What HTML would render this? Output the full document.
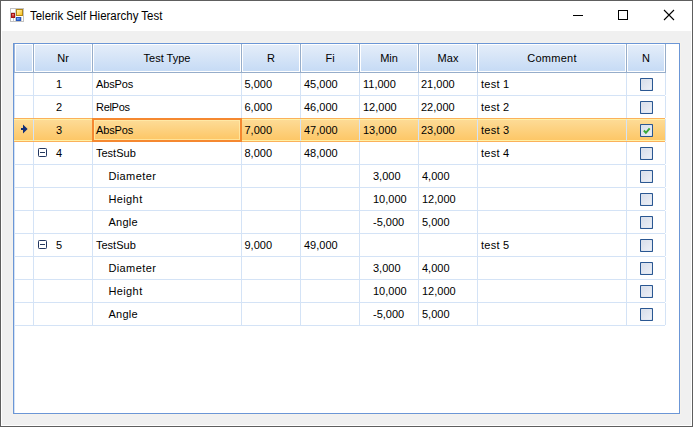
<!DOCTYPE html>
<html><head><meta charset="utf-8"><style>
html,body{margin:0;padding:0;width:693px;height:427px;overflow:hidden;background:#f0f0f0}
div{position:absolute}
.t{font-family:"Liberation Sans", sans-serif;font-size:11px;line-height:23px;color:#000;white-space:nowrap}
</style></head><body>
<svg width="0" height="0" style="position:absolute"><defs><linearGradient id="cbg" x1="0" y1="0" x2="1" y2="1"><stop offset="0" stop-color="#d8deea"/><stop offset="1" stop-color="#eceff6"/></linearGradient></defs></svg>
<div style="left:0px;top:0px;width:693px;height:427px;background:#f0f0f0"></div>
<div style="left:0px;top:0px;width:693px;height:31px;background:#fff"></div>
<div style="left:0px;top:0px;width:693px;height:1px;background:#5e5e5e"></div>
<div style="left:0px;top:426px;width:693px;height:1px;background:#5e5e5e"></div>
<div style="left:0px;top:0px;width:1px;height:427px;background:#5e5e5e"></div>
<div style="left:692px;top:0px;width:1px;height:427px;background:#5e5e5e"></div>
<div style="left:1px;top:31px;width:1px;height:395px;background:#fff"></div>
<div style="left:691px;top:31px;width:1px;height:395px;background:#fff"></div>
<div style="left:1px;top:425px;width:691px;height:1px;background:#fff"></div>
<svg style="position:absolute;left:10px;top:8px" width="14" height="14" viewBox="0 0 14 14">
<defs>
<linearGradient id="gy" x1="0" y1="0" x2="1" y2="1"><stop offset="0" stop-color="#fff4b8"/><stop offset="1" stop-color="#fcc21c"/></linearGradient>
<linearGradient id="rd" x1="0" y1="0" x2="0" y2="1"><stop offset="0" stop-color="#f08080"/><stop offset="1" stop-color="#c01818"/></linearGradient>
<linearGradient id="bl" x1="0" y1="0" x2="1" y2="1"><stop offset="0" stop-color="#8fb8f8"/><stop offset="1" stop-color="#2a62d0"/></linearGradient>
</defs>
<rect x="0" y="0" width="14" height="14" fill="#c2c2c2"/>
<rect x="1" y="1" width="12" height="12" fill="#fff"/>
<rect x="5" y="1" width="1" height="12" fill="#cfcfcf"/>
<rect x="1" y="4" width="4" height="1" fill="#d6d6d6"/>
<rect x="3" y="10" width="1" height="3" fill="#d0d0d0"/>
<rect x="11" y="9" width="1" height="4" fill="#d0d0d0"/>
<rect x="6" y="1" width="7" height="7" fill="#b38612"/>
<rect x="7" y="2" width="5" height="5" fill="url(#gy)"/>
<rect x="1" y="5" width="4" height="5" fill="#a01414"/>
<rect x="2" y="6" width="2" height="3" fill="url(#rd)"/>
<rect x="6" y="9" width="5" height="4" fill="#2858c0"/>
<rect x="7" y="10" width="3" height="2" fill="url(#bl)"/>
</svg>
<div class="t" style="left:30px;top:5px;line-height:23px;font-size:12px;color:#000;transform:scaleX(0.956);transform-origin:0 0">Telerik Self Hierarchy Test</div>
<div style="left:573px;top:15px;width:10px;height:1px;background:#000"></div>
<div style="left:618px;top:10px;width:10px;height:10px;border:1px solid #000;box-sizing:border-box"></div>
<svg style="position:absolute;left:663px;top:9px" width="12" height="12" viewBox="0 0 12 12"><path d="M1 1L11 11M11 1L1 11" stroke="#000" stroke-width="1.1"/></svg>
<div style="left:12px;top:42px;width:668px;height:1px;background:#f5f2ec"></div>
<div style="left:12px;top:42px;width:1px;height:373px;background:#f5f2ec"></div>
<div style="left:680px;top:42px;width:1px;height:373px;background:#f5f2ec"></div>
<div style="left:12px;top:414px;width:669px;height:1px;background:#f5f2ec"></div>
<div style="left:13px;top:43px;width:667px;height:371px;background:#fff;border:1px solid #6b96d6;box-sizing:border-box"></div>
<div style="left:14px;top:44px;width:1px;height:369px;background:#d3e2f5"></div>
<div style="left:14px;top:44px;width:1px;height:29px;background:#9db6da"></div>
<div style="left:15px;top:44px;width:650px;height:1px;background:#fff"></div>
<div style="left:15px;top:71px;width:650px;height:1px;background:#fff"></div>
<div style="left:15px;top:44px;width:1px;height:28px;background:#fff"></div>
<div style="left:16px;top:45px;width:16px;height:26px;background:linear-gradient(#e4edf9,#c6dbf5)"></div>
<div style="left:32px;top:44px;width:1px;height:28px;background:#fff"></div>
<div style="left:33px;top:44px;width:1px;height:29px;background:#96adca"></div>
<div style="left:34px;top:44px;width:1px;height:28px;background:#fff"></div>
<div style="left:35px;top:45px;width:56px;height:26px;background:linear-gradient(#e4edf9,#c6dbf5)"></div>
<div style="left:91px;top:44px;width:1px;height:28px;background:#fff"></div>
<div style="left:92px;top:44px;width:1px;height:29px;background:#96adca"></div>
<div style="left:93px;top:44px;width:1px;height:28px;background:#fff"></div>
<div style="left:94px;top:45px;width:146px;height:26px;background:linear-gradient(#e4edf9,#c6dbf5)"></div>
<div style="left:240px;top:44px;width:1px;height:28px;background:#fff"></div>
<div style="left:241px;top:44px;width:1px;height:29px;background:#96adca"></div>
<div style="left:242px;top:44px;width:1px;height:28px;background:#fff"></div>
<div style="left:243px;top:45px;width:56px;height:26px;background:linear-gradient(#e4edf9,#c6dbf5)"></div>
<div style="left:299px;top:44px;width:1px;height:28px;background:#fff"></div>
<div style="left:300px;top:44px;width:1px;height:29px;background:#96adca"></div>
<div style="left:301px;top:44px;width:1px;height:28px;background:#fff"></div>
<div style="left:302px;top:45px;width:56px;height:26px;background:linear-gradient(#e4edf9,#c6dbf5)"></div>
<div style="left:358px;top:44px;width:1px;height:28px;background:#fff"></div>
<div style="left:359px;top:44px;width:1px;height:29px;background:#96adca"></div>
<div style="left:360px;top:44px;width:1px;height:28px;background:#fff"></div>
<div style="left:361px;top:45px;width:56px;height:26px;background:linear-gradient(#e4edf9,#c6dbf5)"></div>
<div style="left:417px;top:44px;width:1px;height:28px;background:#fff"></div>
<div style="left:418px;top:44px;width:1px;height:29px;background:#96adca"></div>
<div style="left:419px;top:44px;width:1px;height:28px;background:#fff"></div>
<div style="left:420px;top:45px;width:56px;height:26px;background:linear-gradient(#e4edf9,#c6dbf5)"></div>
<div style="left:476px;top:44px;width:1px;height:28px;background:#fff"></div>
<div style="left:477px;top:44px;width:1px;height:29px;background:#96adca"></div>
<div style="left:478px;top:44px;width:1px;height:28px;background:#fff"></div>
<div style="left:479px;top:45px;width:146px;height:26px;background:linear-gradient(#e4edf9,#c6dbf5)"></div>
<div style="left:625px;top:44px;width:1px;height:28px;background:#fff"></div>
<div style="left:626px;top:44px;width:1px;height:29px;background:#96adca"></div>
<div style="left:627px;top:44px;width:1px;height:28px;background:#fff"></div>
<div style="left:628px;top:45px;width:36px;height:26px;background:linear-gradient(#e4edf9,#c6dbf5)"></div>
<div style="left:664px;top:44px;width:1px;height:28px;background:#fff"></div>
<div style="left:665px;top:44px;width:1px;height:29px;background:#96adca"></div>
<div style="left:14px;top:72px;width:651px;height:1px;background:#96adca"></div>
<div class="t" style="left:34px;top:47px;width:58px;text-align:center;color:#000;letter-spacing:0px">Nr</div>
<div class="t" style="left:93px;top:47px;width:148px;text-align:center;color:#000;letter-spacing:0px">Test Type</div>
<div class="t" style="left:242px;top:47px;width:58px;text-align:center;color:#000;letter-spacing:0px">R</div>
<div class="t" style="left:301px;top:47px;width:58px;text-align:center;color:#000;letter-spacing:0px">Fi</div>
<div class="t" style="left:360px;top:47px;width:58px;text-align:center;color:#000;letter-spacing:0px">Min</div>
<div class="t" style="left:419px;top:47px;width:58px;text-align:center;color:#000;letter-spacing:0px">Max</div>
<div class="t" style="left:478px;top:47px;width:148px;text-align:center;color:#000;letter-spacing:0.25px">Comment</div>
<div class="t" style="left:627px;top:47px;width:38px;text-align:center;color:#000;letter-spacing:0px">N</div>
<div style="left:14px;top:95px;width:651px;height:1px;background:#d4e3f6"></div>
<div style="left:33px;top:73px;width:1px;height:22px;background:#d4e3f6"></div>
<div style="left:92px;top:73px;width:1px;height:22px;background:#d4e3f6"></div>
<div style="left:241px;top:73px;width:1px;height:22px;background:#d4e3f6"></div>
<div style="left:300px;top:73px;width:1px;height:22px;background:#d4e3f6"></div>
<div style="left:359px;top:73px;width:1px;height:22px;background:#d4e3f6"></div>
<div style="left:418px;top:73px;width:1px;height:22px;background:#d4e3f6"></div>
<div style="left:477px;top:73px;width:1px;height:22px;background:#d4e3f6"></div>
<div style="left:626px;top:73px;width:1px;height:22px;background:#d4e3f6"></div>
<div style="left:665px;top:73px;width:1px;height:22px;background:#d4e3f6"></div>
<div class="t" style="left:56px;top:73px">1</div>
<div class="t" style="left:96px;top:73px;letter-spacing:-0.15px">AbsPos</div>
<div class="t" style="left:244.5px;top:73px;">5,000</div>
<div class="t" style="left:304px;top:73px;">45,000</div>
<div class="t" style="left:363px;top:73px;">11,000</div>
<div class="t" style="left:421px;top:73px;">21,000</div>
<div class="t" style="left:481px;top:73px;letter-spacing:0.25px">test 1</div>
<svg style="position:absolute;left:640px;top:78px" width="13" height="13" viewBox="0 0 13 13"><rect x="0" y="0" width="13" height="13" rx="0.8" fill="#2a5792"/><rect x="1.1" y="1.1" width="10.8" height="10.8" fill="#f3f5fa"/><rect x="1.7" y="1.7" width="9.6" height="9.6" fill="url(#cbg)"/></svg>
<div style="left:14px;top:118px;width:651px;height:1px;background:#d4e3f6"></div>
<div style="left:33px;top:96px;width:1px;height:22px;background:#d4e3f6"></div>
<div style="left:92px;top:96px;width:1px;height:22px;background:#d4e3f6"></div>
<div style="left:241px;top:96px;width:1px;height:22px;background:#d4e3f6"></div>
<div style="left:300px;top:96px;width:1px;height:22px;background:#d4e3f6"></div>
<div style="left:359px;top:96px;width:1px;height:22px;background:#d4e3f6"></div>
<div style="left:418px;top:96px;width:1px;height:22px;background:#d4e3f6"></div>
<div style="left:477px;top:96px;width:1px;height:22px;background:#d4e3f6"></div>
<div style="left:626px;top:96px;width:1px;height:22px;background:#d4e3f6"></div>
<div style="left:665px;top:96px;width:1px;height:22px;background:#d4e3f6"></div>
<div class="t" style="left:56px;top:96px">2</div>
<div class="t" style="left:96px;top:96px;letter-spacing:-0.3px">RelPos</div>
<div class="t" style="left:244.5px;top:96px;">6,000</div>
<div class="t" style="left:304px;top:96px;">46,000</div>
<div class="t" style="left:363px;top:96px;">12,000</div>
<div class="t" style="left:421px;top:96px;">22,000</div>
<div class="t" style="left:481px;top:96px;letter-spacing:0.25px">test 2</div>
<svg style="position:absolute;left:640px;top:101px" width="13" height="13" viewBox="0 0 13 13"><rect x="0" y="0" width="13" height="13" rx="0.8" fill="#2a5792"/><rect x="1.1" y="1.1" width="10.8" height="10.8" fill="#f3f5fa"/><rect x="1.7" y="1.7" width="9.6" height="9.6" fill="url(#cbg)"/></svg>
<div style="left:14px;top:141px;width:651px;height:1px;background:#d4e3f6"></div>
<div style="left:14px;top:119px;width:651px;height:22px;background:linear-gradient(#fddc98,#fdc665)"></div>
<div style="left:14px;top:118px;width:651px;height:1px;background:#fbb15a"></div>
<div style="left:14px;top:119px;width:651px;height:1px;background:#fff1a6"></div>
<div style="left:14px;top:140px;width:651px;height:1px;background:#fff1a6"></div>
<div style="left:14px;top:141px;width:651px;height:1px;background:#fbb15a"></div>
<div style="left:33px;top:119px;width:1px;height:22px;background:#d4e3f6"></div>
<div style="left:92px;top:119px;width:1px;height:22px;background:#d4e3f6"></div>
<div style="left:241px;top:119px;width:1px;height:22px;background:#d4e3f6"></div>
<div style="left:300px;top:119px;width:1px;height:22px;background:#d4e3f6"></div>
<div style="left:359px;top:119px;width:1px;height:22px;background:#d4e3f6"></div>
<div style="left:418px;top:119px;width:1px;height:22px;background:#d4e3f6"></div>
<div style="left:477px;top:119px;width:1px;height:22px;background:#d4e3f6"></div>
<div style="left:626px;top:119px;width:1px;height:22px;background:#d4e3f6"></div>
<div style="left:665px;top:119px;width:1px;height:22px;background:#d4e3f6"></div>
<div style="left:92px;top:118px;width:150px;height:24px;border:2px solid #f58830;box-sizing:border-box;background:linear-gradient(#fddc98,#fdc665)"></div>
<div style="left:94px;top:120px;width:146px;height:20px;border:1px solid rgba(255,236,170,0.75);box-sizing:border-box"></div>
<svg style="position:absolute;left:20px;top:124px" width="9" height="11" viewBox="0 0 9 11"><path d="M1 4H3V0.6L7.6 5L3 9.4V6H1Z" fill="#112d76"/></svg>
<div class="t" style="left:56px;top:119px">3</div>
<div class="t" style="left:96px;top:119px;letter-spacing:-0.15px">AbsPos</div>
<div class="t" style="left:244.5px;top:119px;">7,000</div>
<div class="t" style="left:304px;top:119px;">47,000</div>
<div class="t" style="left:363px;top:119px;">13,000</div>
<div class="t" style="left:421px;top:119px;">23,000</div>
<div class="t" style="left:481px;top:119px;letter-spacing:0.25px">test 3</div>
<svg style="position:absolute;left:640px;top:124px" width="13" height="13" viewBox="0 0 13 13"><rect x="0" y="0" width="13" height="13" rx="0.8" fill="#2a5792"/><rect x="1.1" y="1.1" width="10.8" height="10.8" fill="#f3f5fa"/><rect x="1.7" y="1.7" width="9.6" height="9.6" fill="url(#cbg)"/><path d="M3.9 6.5L5.9 8.8L9.7 4.4" fill="none" stroke="#3aa83a" stroke-width="2"/></svg>
<div style="left:14px;top:164px;width:651px;height:1px;background:#d4e3f6"></div>
<div style="left:33px;top:142px;width:1px;height:22px;background:#d4e3f6"></div>
<div style="left:92px;top:142px;width:1px;height:22px;background:#d4e3f6"></div>
<div style="left:241px;top:142px;width:1px;height:22px;background:#d4e3f6"></div>
<div style="left:300px;top:142px;width:1px;height:22px;background:#d4e3f6"></div>
<div style="left:359px;top:142px;width:1px;height:22px;background:#d4e3f6"></div>
<div style="left:418px;top:142px;width:1px;height:22px;background:#d4e3f6"></div>
<div style="left:477px;top:142px;width:1px;height:22px;background:#d4e3f6"></div>
<div style="left:626px;top:142px;width:1px;height:22px;background:#d4e3f6"></div>
<div style="left:665px;top:142px;width:1px;height:22px;background:#d4e3f6"></div>
<div class="t" style="left:56px;top:142px">4</div>
<svg style="position:absolute;left:38px;top:148px" width="9" height="9" viewBox="0 0 9 9"><rect x="0.5" y="0.5" width="8" height="8" rx="0.8" fill="#fff" stroke="#223660"/><rect x="2" y="4" width="5" height="1" fill="#263a5e"/></svg>
<div class="t" style="left:96px;top:142px;letter-spacing:0px">TestSub</div>
<div class="t" style="left:244.5px;top:142px;">8,000</div>
<div class="t" style="left:304px;top:142px;">48,000</div>
<div class="t" style="left:481px;top:142px;letter-spacing:0.25px">test 4</div>
<svg style="position:absolute;left:640px;top:147px" width="13" height="13" viewBox="0 0 13 13"><rect x="0" y="0" width="13" height="13" rx="0.8" fill="#2a5792"/><rect x="1.1" y="1.1" width="10.8" height="10.8" fill="#f3f5fa"/><rect x="1.7" y="1.7" width="9.6" height="9.6" fill="url(#cbg)"/></svg>
<div style="left:14px;top:187px;width:651px;height:1px;background:#d4e3f6"></div>
<div style="left:33px;top:165px;width:1px;height:22px;background:#d4e3f6"></div>
<div style="left:92px;top:165px;width:1px;height:22px;background:#d4e3f6"></div>
<div style="left:241px;top:165px;width:1px;height:22px;background:#d4e3f6"></div>
<div style="left:300px;top:165px;width:1px;height:22px;background:#d4e3f6"></div>
<div style="left:359px;top:165px;width:1px;height:22px;background:#d4e3f6"></div>
<div style="left:418px;top:165px;width:1px;height:22px;background:#d4e3f6"></div>
<div style="left:477px;top:165px;width:1px;height:22px;background:#d4e3f6"></div>
<div style="left:626px;top:165px;width:1px;height:22px;background:#d4e3f6"></div>
<div style="left:665px;top:165px;width:1px;height:22px;background:#d4e3f6"></div>
<div class="t" style="left:108.4px;top:165px;letter-spacing:0.4px">Diameter</div>
<div class="t" style="left:373px;top:165px;">3,000</div>
<div class="t" style="left:422px;top:165px;">4,000</div>
<svg style="position:absolute;left:640px;top:170px" width="13" height="13" viewBox="0 0 13 13"><rect x="0" y="0" width="13" height="13" rx="0.8" fill="#2a5792"/><rect x="1.1" y="1.1" width="10.8" height="10.8" fill="#f3f5fa"/><rect x="1.7" y="1.7" width="9.6" height="9.6" fill="url(#cbg)"/></svg>
<div style="left:14px;top:210px;width:651px;height:1px;background:#d4e3f6"></div>
<div style="left:33px;top:188px;width:1px;height:22px;background:#d4e3f6"></div>
<div style="left:92px;top:188px;width:1px;height:22px;background:#d4e3f6"></div>
<div style="left:241px;top:188px;width:1px;height:22px;background:#d4e3f6"></div>
<div style="left:300px;top:188px;width:1px;height:22px;background:#d4e3f6"></div>
<div style="left:359px;top:188px;width:1px;height:22px;background:#d4e3f6"></div>
<div style="left:418px;top:188px;width:1px;height:22px;background:#d4e3f6"></div>
<div style="left:477px;top:188px;width:1px;height:22px;background:#d4e3f6"></div>
<div style="left:626px;top:188px;width:1px;height:22px;background:#d4e3f6"></div>
<div style="left:665px;top:188px;width:1px;height:22px;background:#d4e3f6"></div>
<div class="t" style="left:108.4px;top:188px;letter-spacing:0.4px">Height</div>
<div class="t" style="left:373px;top:188px;">10,000</div>
<div class="t" style="left:422px;top:188px;">12,000</div>
<svg style="position:absolute;left:640px;top:193px" width="13" height="13" viewBox="0 0 13 13"><rect x="0" y="0" width="13" height="13" rx="0.8" fill="#2a5792"/><rect x="1.1" y="1.1" width="10.8" height="10.8" fill="#f3f5fa"/><rect x="1.7" y="1.7" width="9.6" height="9.6" fill="url(#cbg)"/></svg>
<div style="left:14px;top:233px;width:651px;height:1px;background:#d4e3f6"></div>
<div style="left:33px;top:211px;width:1px;height:22px;background:#d4e3f6"></div>
<div style="left:92px;top:211px;width:1px;height:22px;background:#d4e3f6"></div>
<div style="left:241px;top:211px;width:1px;height:22px;background:#d4e3f6"></div>
<div style="left:300px;top:211px;width:1px;height:22px;background:#d4e3f6"></div>
<div style="left:359px;top:211px;width:1px;height:22px;background:#d4e3f6"></div>
<div style="left:418px;top:211px;width:1px;height:22px;background:#d4e3f6"></div>
<div style="left:477px;top:211px;width:1px;height:22px;background:#d4e3f6"></div>
<div style="left:626px;top:211px;width:1px;height:22px;background:#d4e3f6"></div>
<div style="left:665px;top:211px;width:1px;height:22px;background:#d4e3f6"></div>
<div class="t" style="left:108.4px;top:211px;letter-spacing:0.3px">Angle</div>
<div class="t" style="left:373px;top:211px;">-5,000</div>
<div class="t" style="left:422px;top:211px;">5,000</div>
<svg style="position:absolute;left:640px;top:216px" width="13" height="13" viewBox="0 0 13 13"><rect x="0" y="0" width="13" height="13" rx="0.8" fill="#2a5792"/><rect x="1.1" y="1.1" width="10.8" height="10.8" fill="#f3f5fa"/><rect x="1.7" y="1.7" width="9.6" height="9.6" fill="url(#cbg)"/></svg>
<div style="left:14px;top:256px;width:651px;height:1px;background:#d4e3f6"></div>
<div style="left:33px;top:234px;width:1px;height:22px;background:#d4e3f6"></div>
<div style="left:92px;top:234px;width:1px;height:22px;background:#d4e3f6"></div>
<div style="left:241px;top:234px;width:1px;height:22px;background:#d4e3f6"></div>
<div style="left:300px;top:234px;width:1px;height:22px;background:#d4e3f6"></div>
<div style="left:359px;top:234px;width:1px;height:22px;background:#d4e3f6"></div>
<div style="left:418px;top:234px;width:1px;height:22px;background:#d4e3f6"></div>
<div style="left:477px;top:234px;width:1px;height:22px;background:#d4e3f6"></div>
<div style="left:626px;top:234px;width:1px;height:22px;background:#d4e3f6"></div>
<div style="left:665px;top:234px;width:1px;height:22px;background:#d4e3f6"></div>
<div class="t" style="left:56px;top:234px">5</div>
<svg style="position:absolute;left:38px;top:240px" width="9" height="9" viewBox="0 0 9 9"><rect x="0.5" y="0.5" width="8" height="8" rx="0.8" fill="#fff" stroke="#223660"/><rect x="2" y="4" width="5" height="1" fill="#263a5e"/></svg>
<div class="t" style="left:96px;top:234px;letter-spacing:0px">TestSub</div>
<div class="t" style="left:244.5px;top:234px;">9,000</div>
<div class="t" style="left:304px;top:234px;">49,000</div>
<div class="t" style="left:481px;top:234px;letter-spacing:0.25px">test 5</div>
<svg style="position:absolute;left:640px;top:239px" width="13" height="13" viewBox="0 0 13 13"><rect x="0" y="0" width="13" height="13" rx="0.8" fill="#2a5792"/><rect x="1.1" y="1.1" width="10.8" height="10.8" fill="#f3f5fa"/><rect x="1.7" y="1.7" width="9.6" height="9.6" fill="url(#cbg)"/></svg>
<div style="left:14px;top:279px;width:651px;height:1px;background:#d4e3f6"></div>
<div style="left:33px;top:257px;width:1px;height:22px;background:#d4e3f6"></div>
<div style="left:92px;top:257px;width:1px;height:22px;background:#d4e3f6"></div>
<div style="left:241px;top:257px;width:1px;height:22px;background:#d4e3f6"></div>
<div style="left:300px;top:257px;width:1px;height:22px;background:#d4e3f6"></div>
<div style="left:359px;top:257px;width:1px;height:22px;background:#d4e3f6"></div>
<div style="left:418px;top:257px;width:1px;height:22px;background:#d4e3f6"></div>
<div style="left:477px;top:257px;width:1px;height:22px;background:#d4e3f6"></div>
<div style="left:626px;top:257px;width:1px;height:22px;background:#d4e3f6"></div>
<div style="left:665px;top:257px;width:1px;height:22px;background:#d4e3f6"></div>
<div class="t" style="left:108.4px;top:257px;letter-spacing:0.4px">Diameter</div>
<div class="t" style="left:373px;top:257px;">3,000</div>
<div class="t" style="left:422px;top:257px;">4,000</div>
<svg style="position:absolute;left:640px;top:262px" width="13" height="13" viewBox="0 0 13 13"><rect x="0" y="0" width="13" height="13" rx="0.8" fill="#2a5792"/><rect x="1.1" y="1.1" width="10.8" height="10.8" fill="#f3f5fa"/><rect x="1.7" y="1.7" width="9.6" height="9.6" fill="url(#cbg)"/></svg>
<div style="left:14px;top:302px;width:651px;height:1px;background:#d4e3f6"></div>
<div style="left:33px;top:280px;width:1px;height:22px;background:#d4e3f6"></div>
<div style="left:92px;top:280px;width:1px;height:22px;background:#d4e3f6"></div>
<div style="left:241px;top:280px;width:1px;height:22px;background:#d4e3f6"></div>
<div style="left:300px;top:280px;width:1px;height:22px;background:#d4e3f6"></div>
<div style="left:359px;top:280px;width:1px;height:22px;background:#d4e3f6"></div>
<div style="left:418px;top:280px;width:1px;height:22px;background:#d4e3f6"></div>
<div style="left:477px;top:280px;width:1px;height:22px;background:#d4e3f6"></div>
<div style="left:626px;top:280px;width:1px;height:22px;background:#d4e3f6"></div>
<div style="left:665px;top:280px;width:1px;height:22px;background:#d4e3f6"></div>
<div class="t" style="left:108.4px;top:280px;letter-spacing:0.4px">Height</div>
<div class="t" style="left:373px;top:280px;">10,000</div>
<div class="t" style="left:422px;top:280px;">12,000</div>
<svg style="position:absolute;left:640px;top:285px" width="13" height="13" viewBox="0 0 13 13"><rect x="0" y="0" width="13" height="13" rx="0.8" fill="#2a5792"/><rect x="1.1" y="1.1" width="10.8" height="10.8" fill="#f3f5fa"/><rect x="1.7" y="1.7" width="9.6" height="9.6" fill="url(#cbg)"/></svg>
<div style="left:14px;top:325px;width:651px;height:1px;background:#d4e3f6"></div>
<div style="left:33px;top:303px;width:1px;height:22px;background:#d4e3f6"></div>
<div style="left:92px;top:303px;width:1px;height:22px;background:#d4e3f6"></div>
<div style="left:241px;top:303px;width:1px;height:22px;background:#d4e3f6"></div>
<div style="left:300px;top:303px;width:1px;height:22px;background:#d4e3f6"></div>
<div style="left:359px;top:303px;width:1px;height:22px;background:#d4e3f6"></div>
<div style="left:418px;top:303px;width:1px;height:22px;background:#d4e3f6"></div>
<div style="left:477px;top:303px;width:1px;height:22px;background:#d4e3f6"></div>
<div style="left:626px;top:303px;width:1px;height:22px;background:#d4e3f6"></div>
<div style="left:665px;top:303px;width:1px;height:22px;background:#d4e3f6"></div>
<div class="t" style="left:108.4px;top:303px;letter-spacing:0.3px">Angle</div>
<div class="t" style="left:373px;top:303px;">-5,000</div>
<div class="t" style="left:422px;top:303px;">5,000</div>
<svg style="position:absolute;left:640px;top:308px" width="13" height="13" viewBox="0 0 13 13"><rect x="0" y="0" width="13" height="13" rx="0.8" fill="#2a5792"/><rect x="1.1" y="1.1" width="10.8" height="10.8" fill="#f3f5fa"/><rect x="1.7" y="1.7" width="9.6" height="9.6" fill="url(#cbg)"/></svg>
</body></html>
